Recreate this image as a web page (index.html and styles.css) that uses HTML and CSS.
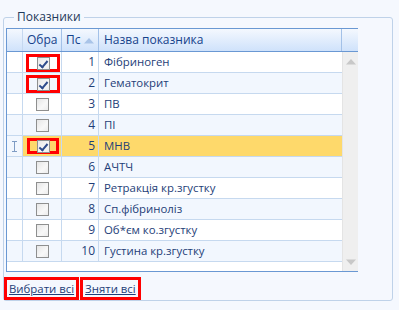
FILE: index.html
```html
<!DOCTYPE html>
<html>
<head>
<meta charset="utf-8">
<link rel="stylesheet" href="styles.css">
</head>
<body>
<fieldset class="group">
  <legend class="group-title">Показники</legend>
  <div class="grid">
    <div class="grid-main">
      <div class="head">
        <div class="c-sel"></div>
        <div class="c-chk">Обра</div>
        <div class="c-num">Пс <svg class="sort" width="12" height="7" viewBox="0 0 12 7"><path d="M1 6.5 L6 1 L11 6.5 Z" fill="#a9c4e8"/></svg></div>
        <div class="c-name">Назва показника</div>
        <div class="c-scroll"></div>
      </div>
      <div class="body">
        <div class="rows">
          <div class="row"><div class="c-sel"></div><div class="c-chk"><span class="mark"><span class="cb on"></span></span></div><div class="c-num">1</div><div class="c-name">Фібриноген</div></div>
          <div class="row alt"><div class="c-sel"></div><div class="c-chk"><span class="mark"><span class="cb on"></span></span></div><div class="c-num">2</div><div class="c-name">Гематокрит</div></div>
          <div class="row"><div class="c-sel"></div><div class="c-chk"><span class="cb"></span></div><div class="c-num">3</div><div class="c-name">ПВ</div></div>
          <div class="row alt"><div class="c-sel"></div><div class="c-chk"><span class="cb"></span></div><div class="c-num">4</div><div class="c-name">ПІ</div></div>
          <div class="row cur"><div class="c-sel"><svg width="7" height="11" viewBox="0 0 7 11"><path d="M1 0.5 H6 M3.5 0.5 V10.5 M1 10.5 H6" stroke="#7f9cc4" stroke-width="1" fill="none"/></svg></div><div class="c-chk"><span class="mark small"><span class="cb on"></span></span></div><div class="c-num">5</div><div class="c-name">МНВ</div></div>
          <div class="row alt"><div class="c-sel"></div><div class="c-chk"><span class="cb"></span></div><div class="c-num">6</div><div class="c-name">АЧТЧ</div></div>
          <div class="row"><div class="c-sel"></div><div class="c-chk"><span class="cb"></span></div><div class="c-num">7</div><div class="c-name">Ретракція кр.згустку</div></div>
          <div class="row alt"><div class="c-sel"></div><div class="c-chk"><span class="cb"></span></div><div class="c-num">8</div><div class="c-name">Сп.фібриноліз</div></div>
          <div class="row"><div class="c-sel"></div><div class="c-chk"><span class="cb"></span></div><div class="c-num">9</div><div class="c-name">Об*єм ко.згустку</div></div>
          <div class="row alt"><div class="c-sel"></div><div class="c-chk"><span class="cb"></span></div><div class="c-num">10</div><div class="c-name">Густина кр.згустку</div></div>
        </div>
        <div class="scrollbar">
          <svg width="12" height="7" viewBox="0 0 12 7"><path d="M1 6.5 L6 1 L11 6.5 Z" fill="#c8c8c8"/></svg>
          <svg width="12" height="7" viewBox="0 0 12 7"><path d="M1 0.5 L6 6 L11 0.5 Z" fill="#c8c8c8"/></svg>
        </div>
      </div>
    </div>
  </div>
  <div class="links">
    <span class="link-box"><a class="link" href="#">Вибрати всі</a></span>
    <span class="link-box"><a class="link" href="#">Зняти всі</a></span>
  </div>
</fieldset>
</body>
</html>
```

FILE: styles.css
```css
* { box-sizing: border-box; }
html, body { margin: 0; padding: 0; }
body {
  background: #f5f8fe;
  font-family: "Open Sans", "Noto Sans", sans-serif;
  font-size: 11.4px;
  color: #1e395b;
  width: 399px;
  height: 310px;
  overflow: hidden;
  padding: 10px 0 0 3px;
}
.group {
  margin: 0;
  width: 390px;
  height: 291px;
  border: 1px solid #bfd2e9;
  border-radius: 3px;
  padding: 4px 2px 0 2px;
  min-width: 0;
}
.group-title {
  margin-left: 8px;
  padding: 0 3px;
  font-size: 12px;
  line-height: 14px;
  color: #1e395b;
}
.grid {
  width: 352px;
  height: 244px;
  border: 1px solid #6a98d3;
  background: #fff;
  display: flex;
}
.grid-main { flex: 1; display: flex; flex-direction: column; }
.head {
  height: 23px;
  display: flex;
  background: linear-gradient(#f4f8fe, #cfe2fb);
  border-bottom: 1px solid #6a98d3;
  color: #15428b;
  line-height: 22px;
  font-size: 12px;
}
.head > div { border-right: 1px solid #a3c1e8; padding-left: 4px; white-space: nowrap; overflow: hidden; }
.head .c-sel { border-right: 1px solid #c5d8f0; }
.head .c-scroll { border-right: none; flex: 1; }
.head .c-num { display: flex; align-items: center; gap: 2px; padding-left: 4px; }
.head .c-name { width: 243px; flex: none; padding-left: 5px; }
.c-sel { width: 16px; flex: none; }
.c-chk { width: 39px; flex: none; }
.c-num { width: 37px; flex: none; }
.c-name { flex: 1; }
.sort { margin-left: 1px; }
.body { flex: 1; display: flex; }
.rows { width: 335px; flex: none; }
.row {
  height: 21px;
  display: flex;
  border-bottom: 1px solid #c6d9ef;
  background: #fff;
  line-height: 20px;
  font-size: 12px;
}
.row.alt { background: #f2f7fe; }
.row.cur { background: #fed96b; }
.row.cur .c-sel { background: #f2f7fe; }
.row > div { border-right: 1px solid #c6d9ef; }
.row > .c-name { border-right: none; padding-left: 5px; color: #1e3e78; white-space: nowrap; font-size: 11.4px; }
.row > .c-num { text-align: right; padding-right: 3px; color: #1e3e78; }
.row > .c-sel { display: flex; align-items: center; justify-content: center; }
.row > .c-chk { display: flex; align-items: center; justify-content: center; position: relative; }
.cb {
  width: 13px; height: 13px;
  border: 1px solid #8e8f8f;
  background: linear-gradient(135deg, #e6e6e6, #f8f8f8 60%, #ececec);
  display: block;
  position: relative;
}
.cb.on::after {
  content: "";
  position: absolute;
  left: 3px; top: 1px;
  width: 3px; height: 7px;
  border: solid #2f4c8c;
  border-width: 0 2px 2px 0;
  transform: rotate(40deg);
}
.mark {
  position: absolute;
  left: 3px; top: 2px;
  width: 34px; height: 18px;
  border: 3px solid #ff0000;
  display: flex; align-items: center; justify-content: center;
}
.mark.small { left: 4px; top: 2px; width: 32px; height: 16px; }
.scrollbar {
  width: 16px;
  flex: none;
  background: #efefef;
  border-left: 1px solid #e4e4e4;
  display: flex;
  flex-direction: column;
  justify-content: space-between;
  align-items: center;
  padding: 6px 0 5px;
}
.links { display: flex; gap: 1px; margin-top: 5px; margin-left: -2px; }
.link-box {
  border: 3px solid #ff0000;
  height: 23px;
  padding: 0 2px;
  display: flex;
  align-items: center;
}
.link { color: #1e3e78; text-decoration: underline; font-size: 11.4px; }
```
